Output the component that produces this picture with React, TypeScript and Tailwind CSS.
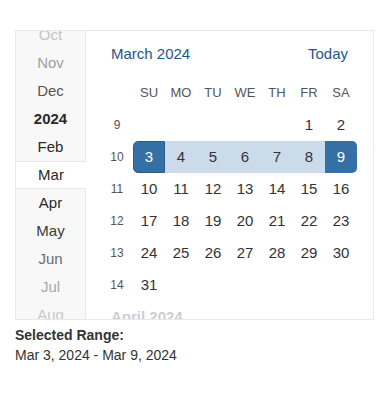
import React from "react";

const months: { label: string; cls: string }[] = [
  { label: "Oct", cls: "text-[#c4c4c4]" },
  { label: "Nov", cls: "text-[#a0a0a0]" },
  { label: "Dec", cls: "text-[#555]" },
  { label: "2024", cls: "text-[#2a2a2a] font-bold" },
  { label: "Feb", cls: "text-[#2a2a2a]" },
  { label: "Mar", cls: "text-[#2a2a2a]" },
  { label: "Apr", cls: "text-[#2a2a2a]" },
  { label: "May", cls: "text-[#3a3a3a]" },
  { label: "Jun", cls: "text-[#6a6a6a]" },
  { label: "Jul", cls: "text-[#a8a8a8]" },
  { label: "Aug", cls: "text-[#c8c8c8]" },
];

const weeks: { wk: number; days: (number | null)[] }[] = [
  { wk: 9, days: [null, null, null, null, null, 1, 2] },
  { wk: 10, days: [3, 4, 5, 6, 7, 8, 9] },
  { wk: 11, days: [10, 11, 12, 13, 14, 15, 16] },
  { wk: 12, days: [17, 18, 19, 20, 21, 22, 23] },
  { wk: 13, days: [24, 25, 26, 27, 28, 29, 30] },
  { wk: 14, days: [31, null, null, null, null, null, null] },
];

const heads = ["SU", "MO", "TU", "WE", "TH", "FR", "SA"];

function DayCell({ d }: { d: number | null }) {
  if (d === null) return <div className="h-8" />;
  if (d === 3)
    return (
      <div className="h-8 flex items-center justify-center bg-[#3470a6] text-white rounded-l-[5px] border border-[#2a5c8a] text-[15px]">
        {d}
      </div>
    );
  if (d === 9)
    return (
      <div className="h-8 flex items-center justify-center bg-[#3470a6] text-white rounded-r-[5px] text-[15px]">
        {d}
      </div>
    );
  if (d > 3 && d < 9)
    return (
      <div className="h-8 flex items-center justify-center bg-[#ccdbe9] text-[#333] text-[15px]">
        {d}
      </div>
    );
  return (
    <div className="h-8 flex items-center justify-center text-[#333] text-[15px]">
      {d}
    </div>
  );
}

export default function App() {
  return (
    <div
      className="pt-[30px] pl-[15px] bg-white min-h-[418px]"
      style={{ fontFamily: '"Liberation Sans", Arial, sans-serif' }}
    >
      <div className="w-[359px] h-[290px] border border-[#e8e8e8] flex overflow-hidden">
        <div className="w-[70px] shrink-0 overflow-hidden bg-[#f8f8f8]">
          <div className="mt-[-10px]">
            {months.map((m) =>
              m.label === "Mar" ? (
                <div
                  key={m.label}
                  className={`h-[28px] flex items-center justify-center bg-white border-y border-[#e8e8e8] text-[15px] ${m.cls}`}
                >
                  {m.label}
                </div>
              ) : (
                <div
                  key={m.label}
                  className={`h-[28px] flex items-center justify-center border-r border-[#e8e8e8] text-[15px] ${m.cls}`}
                >
                  {m.label}
                </div>
              )
            )}
          </div>
        </div>
        <div className="flex-1 overflow-hidden bg-white">
          <div className="flex items-center justify-between pt-[13px] pl-[25px] pr-[25px] h-[33px] leading-[20px]">
            <span className="text-[15px] text-[#1f5589]">March 2024</span>
            <span className="text-[15px] text-[#1f5589]">Today</span>
          </div>
          <div className="pl-[15px] mt-[13px]">
            <div className="grid grid-cols-[32px_repeat(7,32px)] h-8 items-center">
              <div />
              {heads.map((h) => (
                <div key={h} className="text-center text-[13px] text-[#555]">
                  {h}
                </div>
              ))}
            </div>
            {weeks.map((w) => (
              <div key={w.wk} className="grid grid-cols-[32px_repeat(7,32px)] h-8 items-center">
                <div className="text-center text-[12px] text-[#555]">{w.wk}</div>
                {w.days.map((d, i) => (
                  <DayCell key={i} d={d} />
                ))}
              </div>
            ))}
          </div>
          <div className="pl-[25px] mt-[6px] leading-[20px] text-[15px] font-bold text-[#c9ced4]">
            April 2024
          </div>
        </div>
      </div>
      <div className="mt-[5px] text-[14px] leading-[20px] text-[#333]">
        <div className="font-bold">Selected Range:</div>
        <div>Mar 3, 2024 - Mar 9, 2024</div>
      </div>
    </div>
  );
}
